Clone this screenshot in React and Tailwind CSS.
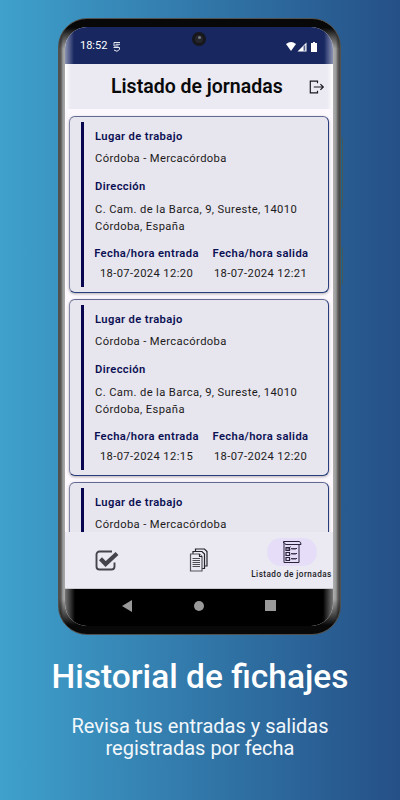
import clsx from "clsx";

const jornadas = [
  { id: 1, entrada: "18-07-2024 12:20", salida: "18-07-2024 12:21" },
  { id: 2, entrada: "18-07-2024 12:15", salida: "18-07-2024 12:20" },
];

const LogoutIcon = () => (
  <svg width="16" height="14" viewBox="0 0 16 14" fill="none" stroke="#1b1b22" strokeWidth="1.2">
    <path d="M8.500 3.200V1.100H1.300v11.800h7.200v-2.100M4.800 7h9.400M11.400 4.100 14.300 7l-2.900 2.900" />
  </svg>
);

const CheckIcon = () => (
  <svg width="24" height="21" viewBox="0 0 24 21" fill="none" stroke="#45444d">
    <path d="M17 1.500H4.500a3 3 0 0 0-3 3v12a3 3 0 0 0 3 3h12a3 3 0 0 0 3-3v-4" strokeWidth="1.900" />
    <path d="M5.500 8.800 10.600 14 22 3.500" strokeWidth="4.200" />
  </svg>
);

const DocsIcon = () => (
  <svg width="20" height="24" viewBox="0 0 20 24" fill="#ebe9f1" stroke="#24232b" strokeWidth="1.2">
    <path d="M6.500 1h9l2.500 2.500V18H6.500z" />
    <path d="M4 3.500h9l2.500 2.500v14.500H4z" />
    <path d="M1.500 6h9L13 8.500V23H1.500z" stroke="#55545c" />
    <path d="M10.500 6v2.500H13" />
    <path d="M3.500 10.500H11M3.500 12.500H11M3.500 14.500H11M3.500 16.500H11M3.500 18.500H11" strokeWidth=".8" />
  </svg>
);

const ListIcon = () => (
  <svg width="20" height="24" viewBox="0 0 20 24" fill="none" stroke="#29233a" strokeWidth="1">
    <path d="M2 4V22.500H17V4" />
    <path d="M1.500 3.500V1.500H17Q19 1.500 19 4.500H4Q2.500 4.500 2.500 2.500" />
    <path d="M4 7.500h3.500v3H4zM4 12.500h3.500v3H4zM4 17.500h3.500v3H4z" strokeWidth="1.200" />
    <path d="m4.500 8 1.500 1.500 2.500-3" />
    <path d="M9 9.500l1-1.500 1 1.500 1-1.500 1 1.500 1-1.500 1 1M9 14.500l1-1.500 1 1.500 1-1.500 1 1.500 1-1.500 1 1M9 19.500l1-1.500 1 1.500 1-1.500 1 1.500 1-1.500 1 1" />
  </svg>
);

const StatusBar = () => (
  <div className="relative flex h-[37px] shrink-0 items-center bg-[linear-gradient(90deg,#8c93b3_0,#182760_9px,#182760_259px,#8c93b3_268px)] px-[15px] pt-[2px] text-[11px] text-white">
    <span>18:52</span>
    <svg className="ml-[6px]" width="8" height="10" viewBox="0 0 8 10" fill="none" stroke="#e6e8f0">
      <path d="M7 .500H1v3.500h4.500M2.500 2.300h4.500M.500 5.500h6v2L4 9.300 1 8" />
    </svg>
    <div className="ml-auto flex items-center gap-[1px]">
      <svg width="10" height="9" viewBox="0 0 10 9">
        <path d="M0 2Q5-2 10 2L5 9z" fill="#fff" />
      </svg>
      <svg width="10" height="10" viewBox="0 0 10 10">
        <path d="M9.500.500v9H.500z" fill="#fff" />
        <path d="M6.500 4.500 8.300 2.700v6H6.500z" fill="#55608d" />
      </svg>
      <svg className="ml-[3px] mr-[1px]" width="6" height="10" viewBox="0 0 6 10">
        <path d="M2 0h2v1h2v9H0V1h2z" fill="#fff" />
      </svg>
    </div>
    <div className="absolute left-[127px] top-[5px] size-[14px] rounded-full border-[3px] border-[#17171b] bg-[#25262b]">
      <div className="ml-[3px] mt-[1px] size-[3px] rounded-full bg-[#73777d]" />
    </div>
  </div>
);

const Label = ({ children, className }) => (
  <p className={clsx("whitespace-nowrap text-[11.2px] font-semibold leading-[22px] tracking-[0.38px] text-[#0b1053]", className)}>
    {children}
  </p>
);

const cardClasses =
  "flex shrink-0 border border-[#293e7d] border-l-[#8085a5] border-t-[#626a93] bg-[#e7e5ee] pl-[11px] pt-[5px] shadow-[0_1px_3px_rgba(0,0,0,0.3)]";

const JornadaCard = ({ entrada, salida }) => (
  <div className={clsx(cardClasses, "h-[177px] rounded-[6px]")}>
    <div className="h-[165px] w-[3px] bg-[#07064f]" />
    <div className="ml-[11px] pt-[4px] text-[11.2px] tracking-[0.38px] text-[#1c1b20]">
      <Label>Lugar de trabajo</Label>
      <p className="leading-[22px]">Córdoba - Mercacórdoba</p>
      <Label className="mt-[6px]">Dirección</Label>
      <p className="mt-[3px] whitespace-nowrap leading-[17px]">
        C. Cam. de la Barca, 9, Sureste, 14010
        <br />
        Córdoba, España
      </p>
      <div className="-ml-px mt-[8px] flex gap-[13px] text-center">
        <div className="w-[105px]">
          <Label>Fecha/hora entrada</Label>
          <p className="-mt-px whitespace-nowrap leading-[20px]">{entrada}</p>
        </div>
        <div className="w-[97px]">
          <Label>Fecha/hora salida</Label>
          <p className="-mt-px whitespace-nowrap leading-[20px]">{salida}</p>
        </div>
      </div>
    </div>
  </div>
);

// Top of the next entry, peeking out above the navigation
const JornadaPeek = () => (
  <div className={clsx(cardClasses, "h-[50px] rounded-t-[6px] border-b-0")}>
    <div className="w-[3px] bg-[#07064f]" />
    <div className="ml-[11px] h-[44px] pt-[4px] text-[11.2px] tracking-[0.38px] text-[#1c1b20]">
      <Label>Lugar de trabajo</Label>
      <p className="pt-[2px] leading-[18px]">Córdoba - Mercacórdoba</p>
    </div>
  </div>
);

const BottomNav = () => (
  <div className="flex h-[57px] shrink-0 border-b border-[#c9c8cd] bg-[#ebe9f1]">
    <div className="flex w-[83px] items-center justify-center">
      <CheckIcon />
    </div>
    <div className="flex flex-1 items-center justify-center">
      <DocsIcon />
    </div>
    <div className="flex w-[83px] flex-col items-center pt-[6px]">
      <div className="flex h-[28px] w-[50px] items-center justify-center rounded-full bg-[#e6ddf8]">
        <ListIcon />
      </div>
      <span className="mt-[2px] whitespace-nowrap text-[8.2px] font-medium leading-[13px] tracking-[0.45px] text-[#202026]">
        Listado de jornadas
      </span>
    </div>
  </div>
);

const AndroidKeys = () => (
  <div className="flex h-[37px] shrink-0 justify-between bg-[linear-gradient(90deg,#777_0,#000_10px,#000_258px,#777_268px)] px-[57px] pt-[11px]">
    <svg width="10" height="12" viewBox="0 0 10 12">
      <path d="M10 0v12L0 6z" fill="#999" />
    </svg>
    <div className="mt-px size-[10px] rounded-full bg-[#999]" />
    <div className="size-[11px] bg-[#999]" />
  </div>
);

const Phone = () => (
  <div className="relative mr-[1px] h-[617px] w-[283px]">
    {/* Side keys */}
    <div className="absolute -right-[2px] top-[119px] h-[72px] w-[3px] rounded-r-sm border-r border-[#4b5459] bg-[#17678e]" />
    <div className="absolute -right-[2px] top-[229px] h-[38px] w-[3px] rounded-r-sm border-r border-[#4b5459] bg-[#17678e]" />
    <div className="relative h-full rounded-[29px] border border-[#51514f] bg-[linear-gradient(180deg,#080808_0,#080808_9px,transparent_30px,transparent_580px,#080808_606px),linear-gradient(90deg,#4c4b49_0,#5c5b5a_2px,#9c9c9c_4px,#b0b0b0_7px,#b0b0b0_274px,#999_277px,#5c5b5a_279px,#444_281px)] px-[6px] py-[8px]">
      <div className="flex h-full w-[268px] flex-col overflow-hidden rounded-[22px] bg-[#fcf8fd]">
        <StatusBar />
        <div className="flex h-[45px] shrink-0 items-center bg-[linear-gradient(90deg,#fff_0,#ebe9f1_6px,#ebe9f1_262px,#fff_268px)] pl-[46px] pr-[8px]">
          <h1 className="whitespace-nowrap text-[19.500px] font-semibold text-[#09090b]">Listado de jornadas</h1>
          <div className="ml-auto">
            <LogoutIcon />
          </div>
        </div>
        <div className="flex flex-1 flex-col gap-[6px] px-[4px] pt-[7px]">
          {jornadas.map((jornada) => (
            <JornadaCard key={jornada.id} {...jornada} />
          ))}
          <JornadaPeek />
        </div>
        <BottomNav />
        <AndroidKeys />
      </div>
    </div>
  </div>
);

export default function App() {
  return (
    <div className="flex h-[800px] w-[400px] flex-col items-center overflow-hidden bg-linear-to-r from-[#3fa1cc] to-[#255087] pt-[18px] font-['Roboto',sans-serif]">
      <Phone />
      <h2 className="mt-[21px] whitespace-nowrap text-[33.500px] font-medium leading-[42px] text-white">
        Historial de fichajes
      </h2>
      <p className="mt-[17px] whitespace-nowrap text-center text-[20px] leading-[22px] text-[#f2f7fb]">
        Revisa tus entradas y salidas
        <br />
        registradas por fecha
      </p>
    </div>
  );
}
